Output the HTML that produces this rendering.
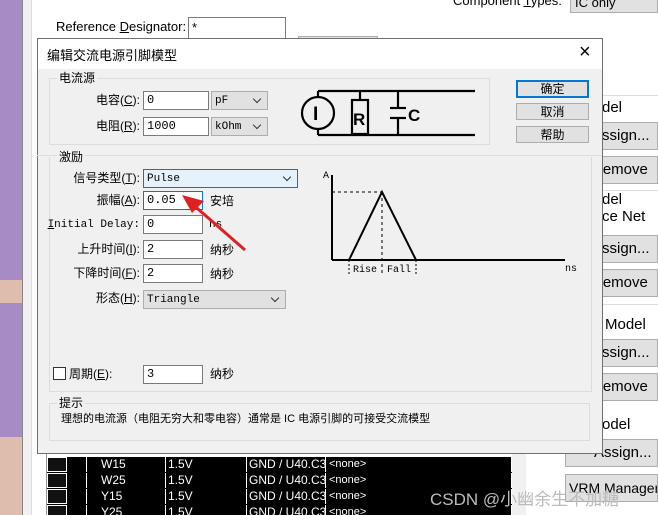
<!DOCTYPE html>
<html><head><meta charset="utf-8"><style>
*{margin:0;padding:0;box-sizing:border-box}
html,body{width:658px;height:515px;overflow:hidden}
body{position:relative;background:#fff;font-family:"Liberation Sans","Noto Sans CJK SC",sans-serif;font-size:12px;color:#000}
.a{position:absolute;white-space:nowrap}
.cj{font-family:"Liberation Sans","Noto Sans CJK SC",sans-serif;font-size:12px}
.mono{font-family:"Liberation Mono","Noto Sans CJK SC",monospace;font-size:11px}
.inp{position:absolute;background:#fff;border:1px solid #7a7a7a;height:19px;padding:0 3px;line-height:17px;font-family:"Liberation Mono",monospace;font-size:12px}
.sel{position:absolute;background:#e1e1e1;border:1px solid #adadad;height:19px;padding:0 3px;line-height:18px;font-family:"Liberation Mono",monospace;font-size:11px}
.sel:after{content:"";position:absolute;right:7px;top:4px;width:5px;height:5px;border-right:1px solid #333;border-bottom:1px solid #333;transform:rotate(45deg)}
.btn{position:absolute;background:#e1e1e1;border:1px solid #adadad;text-align:center;font-size:12px;line-height:16px}
.grp{position:absolute;border:1px solid #dcdcdc}
.gl{position:absolute;background:#f0f0f0;padding:0 2px;font-size:12px;line-height:14px}
.lbl{position:absolute;text-align:right;font-size:12px;line-height:16px;white-space:nowrap}
.rb{position:absolute;left:575px;width:83px;background:#e1e1e1;border:1px solid #adadad;font-size:15px;padding-left:16px;line-height:26px;white-space:nowrap;overflow:hidden}
.row{position:absolute;left:47px;width:465px;height:16px;background:#000;color:#fff;font-size:12px;white-space:nowrap}
.row div{position:absolute;top:0;height:15px;border-right:1px solid #fff;line-height:15px;overflow:hidden}
</style></head><body>
<div class="a" style="left:0;top:0;width:22px;height:515px;background:#a78bc4"></div>
<div class="a" style="left:0;top:280px;width:22px;height:23px;background:#dfbdae"></div>
<div class="a" style="left:0;top:437px;width:22px;height:78px;background:#dfbdae"></div>
<div class="a" style="left:22px;top:0;width:1px;height:515px;background:#888"></div>
<div class="a" style="left:23px;top:0;width:8px;height:515px;background:#f0f0f0"></div>
<div class="a" style="left:31px;top:0;width:1px;height:515px;background:#ddd"></div>
<div class="a" style="left:46px;top:440px;width:1px;height:75px;background:#999"></div>
<div class="a" style="left:56px;top:19px;font-size:13px">Reference <u>D</u>esignator:</div>
<div class="a" style="left:188px;top:17px;width:98px;height:24px;border:1px solid #7a7a7a;padding:2px 3px;font-size:13px">*</div>
<div class="a" style="left:453px;top:-7px;font-size:13px">Component <u>T</u>ypes:</div>
<div class="a" style="left:570px;top:-5px;width:88px;height:18px;background:#e1e1e1;border:1px solid #adadad;padding-left:4px;font-size:13px;line-height:14px">IC only</div>
<div class="a" style="left:298px;top:36px;width:80px;height:4px;background:#e1e1e1;border:1px solid #adadad"></div>
<!-- right panel -->
<div class="a" style="left:600px;top:95px;width:58px;height:1px;background:#ddd"></div>
<div class="a" style="left:602px;top:99px;font-size:15px">del</div>
<div class="rb" style="top:122px;height:28px">Assign...</div>
<div class="rb" style="top:156px;height:28px">Remove</div>
<div class="a" style="left:600px;top:190px;width:58px;height:1px;background:#ddd"></div>
<div class="a" style="left:602px;top:191px;font-size:15px;line-height:17px">del<br>ce Net</div>
<div class="rb" style="top:235px;height:28px">Assign...</div>
<div class="rb" style="top:269px;height:28px">Remove</div>
<div class="a" style="left:600px;top:304px;width:58px;height:1px;background:#ddd"></div>
<div class="a" style="left:605px;top:316px;font-size:15px">Model</div>
<div class="rb" style="top:339px;height:28px">Assign...</div>
<div class="rb" style="top:373px;height:28px">Remove</div>
<div class="a" style="left:602px;top:416px;font-size:15px">odel</div>
<div class="rb" style="top:439px;height:28px;left:565px;width:93px;padding-left:28px">Assign...</div>
<div class="rb" style="top:474px;height:28px;left:565px;width:93px;padding-left:3px;font-size:14px">VRM Manager...</div>
<div class="a" style="left:512px;top:440px;width:14px;height:75px;background:#f0f0f0"></div>
<!-- table -->
<div class="row" style="top:457px"><div style="left:0;width:20px;background:#111;border:1px solid #fff"></div><div style="left:20px;width:20px"></div><div style="left:40px;width:79px;padding-left:14px">W15</div><div style="left:119px;width:81px;padding-left:2px">1.5V</div><div style="left:200px;width:79px;padding-left:2px">GND / U40.C34</div><div style="left:279px;width:186px;padding-left:3px;font-size:11px">&lt;none&gt;</div></div>
<div class="row" style="top:473px"><div style="left:0;width:20px;background:#111;border:1px solid #fff"></div><div style="left:20px;width:20px"></div><div style="left:40px;width:79px;padding-left:14px">W25</div><div style="left:119px;width:81px;padding-left:2px">1.5V</div><div style="left:200px;width:79px;padding-left:2px">GND / U40.C34</div><div style="left:279px;width:186px;padding-left:3px;font-size:11px">&lt;none&gt;</div></div>
<div class="row" style="top:489px"><div style="left:0;width:20px;background:#111;border:1px solid #fff"></div><div style="left:20px;width:20px"></div><div style="left:40px;width:79px;padding-left:14px">Y15</div><div style="left:119px;width:81px;padding-left:2px">1.5V</div><div style="left:200px;width:79px;padding-left:2px">GND / U40.C34</div><div style="left:279px;width:186px;padding-left:3px;font-size:11px">&lt;none&gt;</div></div>
<div class="row" style="top:505px"><div style="left:0;width:20px;background:#111;border:1px solid #fff"></div><div style="left:20px;width:20px"></div><div style="left:40px;width:79px;padding-left:14px">Y25</div><div style="left:119px;width:81px;padding-left:2px">1.5V</div><div style="left:200px;width:79px;padding-left:2px">GND / U40.C34</div><div style="left:279px;width:186px;padding-left:3px;font-size:11px">&lt;none&gt;</div></div>
<div class="a" style="left:430px;top:485px;font-size:17px;color:#bbb">CSDN @小幽余生不加糖</div>
<!-- dialog -->
<div class="a" style="left:37px;top:38px;width:566px;height:416px;background:#f0f0f0;border:1px solid #707070">
 <div class="a" style="left:0;top:0;width:564px;height:30px;background:#fff"></div>
 <div class="a cj" style="left:9px;top:6px;font-size:13px">编辑交流电源引脚模型</div>
 <div class="a" style="left:541px;top:2px;font-size:20px;font-weight:300">×</div>
</div>
<div class="grp" style="left:49px;top:78px;width:441px;height:67px"></div>
<div class="gl" style="left:57px;top:71px">电流源</div>
<div class="lbl" style="left:70px;top:92px;width:70px">电容(<u>C</u>):</div>
<div class="inp" style="left:143px;top:91px;width:66px">0</div>
<div class="sel" style="left:211px;top:91px;width:57px">pF</div>
<div class="lbl" style="left:70px;top:118px;width:70px">电阻(<u>R</u>):</div>
<div class="inp" style="left:143px;top:117px;width:66px">1000</div>
<div class="sel" style="left:211px;top:117px;width:57px">kOhm</div>
<svg class="a" style="left:295px;top:85px" width="180" height="60">
 <g stroke="#000" stroke-width="2.2" fill="none">
 <circle cx="23" cy="28" r="16"/>
 <line x1="23" y1="12" x2="23" y2="6"/><line x1="23" y1="6" x2="180" y2="6"/>
 <line x1="23" y1="44" x2="23" y2="50"/><line x1="23" y1="50" x2="180" y2="50"/>
 <rect x="57" y="15" width="16" height="34"/><line x1="65" y1="6" x2="65" y2="15"/>
 <line x1="103" y1="6" x2="103" y2="23"/><line x1="103" y1="33" x2="103" y2="50"/>
 <line x1="95" y1="23" x2="111" y2="23"/><line x1="95" y1="33" x2="111" y2="33"/>
 </g>
 <text x="18" y="35" font-family="Liberation Sans" font-weight="bold" font-size="19">I</text>
 <text x="58" y="40" font-family="Liberation Sans" font-weight="bold" font-size="17">R</text>
 <text x="113" y="36" font-family="Liberation Sans" font-weight="bold" font-size="17">C</text>
</svg>
<div class="btn" style="left:516px;top:80px;width:73px;height:18px;border:2px solid #0078d7;line-height:14px">确定</div>
<div class="btn" style="left:516px;top:103px;width:73px;height:17px">取消</div>
<div class="btn" style="left:516px;top:126px;width:73px;height:17px">帮助</div>
<div class="a" style="left:37px;top:155px;width:565px;height:1px;background:#ddd"></div>
<div class="grp" style="left:49px;top:157px;width:543px;height:235px;border-top:none"></div>
<div class="gl" style="left:57px;top:150px">激励</div>
<div class="lbl" style="left:40px;top:170px;width:100px">信号类型(<u>T</u>):</div>
<div class="sel" style="left:143px;top:169px;width:155px;background:#e5f1fb;border-color:#0078d7">Pulse</div>
<div class="lbl" style="left:40px;top:192px;width:100px">振幅(<u>A</u>):</div>
<div class="inp" style="left:143px;top:191px;width:60px;border-color:#0078d7">0.05</div>
<div class="a" style="left:210px;top:192px">安培</div>
<div class="lbl mono" style="left:40px;top:217px;width:100px;font-size:11px"><u>I</u>nitial Delay:</div>
<div class="inp" style="left:143px;top:215px;width:60px">0</div>
<div class="a mono" style="left:209px;top:219px">ns</div>
<div class="lbl" style="left:40px;top:241px;width:100px">上升时间(<u>I</u>):</div>
<div class="inp" style="left:143px;top:240px;width:60px">2</div>
<div class="a" style="left:210px;top:241px">纳秒</div>
<div class="lbl" style="left:40px;top:265px;width:100px">下降时间(<u>F</u>):</div>
<div class="inp" style="left:143px;top:264px;width:60px">2</div>
<div class="a" style="left:210px;top:265px">纳秒</div>
<div class="lbl" style="left:40px;top:290px;width:100px">形态(<u>H</u>):</div>
<div class="sel" style="left:143px;top:290px;width:143px">Triangle</div>
<div class="a" style="left:53px;top:367px;width:13px;height:13px;border:1px solid #333;background:#fff"></div>
<div class="a" style="left:69px;top:365px">周期(<u>E</u>):</div>
<div class="inp" style="left:143px;top:365px;width:60px">3</div>
<div class="a" style="left:210px;top:365px">纳秒</div>
<svg class="a" style="left:320px;top:165px" width="270" height="115">
 <g stroke="#000" fill="none">
 <line x1="12" y1="10" x2="12" y2="95" stroke-width="2"/>
 <line x1="12" y1="95" x2="245" y2="95" stroke-width="2"/>
 <polyline points="29,95 62,27 96,95" stroke-width="2"/>
 <line x1="12" y1="27" x2="62" y2="27" stroke-dasharray="3,3"/>
 <line x1="62" y1="27" x2="62" y2="108" stroke-dasharray="3,3"/>
 <line x1="29" y1="95" x2="29" y2="110" stroke-dasharray="2,2"/>
 <line x1="96" y1="95" x2="96" y2="110" stroke-dasharray="2,2"/>
 </g>
 <text x="3" y="13" font-family="Liberation Mono" font-size="10">A</text>
 <text x="33" y="107" font-family="Liberation Mono" font-size="10">Rise</text>
 <text x="67" y="107" font-family="Liberation Mono" font-size="10">Fall</text>
 <text x="245" y="106" font-family="Liberation Mono" font-size="10">ns</text>
</svg>
<svg class="a" style="left:170px;top:185px" width="80" height="70">
 <line x1="75" y1="65" x2="20" y2="17" stroke="#e02020" stroke-width="3"/>
 <polygon points="12,10 34,16 22,28" fill="#e02020"/>
</svg>
<div class="grp" style="left:49px;top:403px;width:541px;height:38px"></div>
<div class="gl" style="left:57px;top:396px">提示</div>
<div class="a" style="left:61px;top:410px;font-size:11px">理想的电流源（电阻无穷大和零电容）通常是 IC 电源引脚的可接受交流模型</div>
</body></html>
